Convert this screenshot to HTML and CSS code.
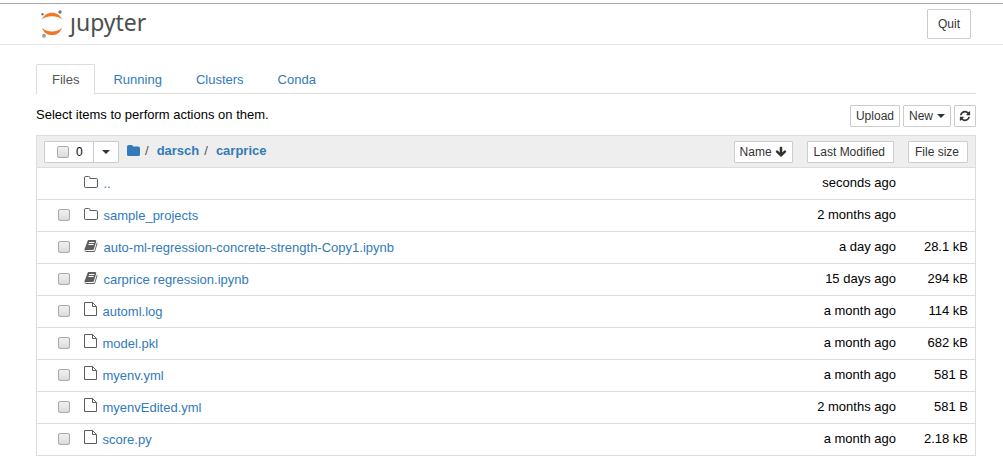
FILE: index.html
```html
<!DOCTYPE html>
<html lang="en">
<head>
<meta charset="utf-8">
<title>Home</title>
<link rel="stylesheet" href="styles.css">
</head>
<body>
<svg class="sprite" aria-hidden="true">
  <symbol id="folder-o" viewBox="0 0 14 14"><path d="M.5 11V3A1.300 1.300 0 0 1 1.800 1.500H4.700A1.300 1.300 0 0 1 6 2.800V3.500H12.200A1.300 1.300 0 0 1 13.500 4.800V11A1.300 1.300 0 0 1 12.200 12.500H1.800A1.300 1.300 0 0 1 .5 11Z" fill="none" stroke="currentColor"/></symbol>
  <symbol id="folder" viewBox="0 0 14 14"><path d="M0 10.500V2.500A1.700 1.700 0 0 1 1.700 1H4.500A1.700 1.700 0 0 1 6.200 2.500H11.300A1.700 1.700 0 0 1 13 4.200V10.500A1.500 1.500 0 0 1 11.500 12H1.500A1.500 1.500 0 0 1 0 10.500Z" fill="currentColor"/></symbol>
  <symbol id="file-o" viewBox="0 0 14 14"><path d="M.5 .5H8.500L12.500 4.500V13.500H.5ZM8.500 .5V4.500H12.500" fill="none" stroke="currentColor"/></symbol>
  <symbol id="book" viewBox="0 0 1792 1792"><path fill="currentColor" d="M1703 478q40 57 18 129l-275 906q-19 64-76.500 107.500t-122.500 43.500h-923q-77 0-148.500-53.500t-99.500-131.500q-24-67-2-127 0-4 3-27t4-37q1-8-3-21.500t-3-19.500q2-11 8-21t16.500-23.500 16.500-23.500q23-38 45-91.500t30-91.500q3-10 .5-30t-.5-28q3-11 17-28t17-23q21-36 42-92t25-90q1-9-2.500-32t.5-28q4-13 22-30.500t22-22.500q19-26 42.500-84.500t27.500-96.500q1-8-3-25.500t-2-26.500q2-8 9-18t18-23 17-21q8-12 16.500-30.500t15-35 16-36 19.500-32 26.500-23.500 36-11.500 47.500 5.500l-1 3q38-9 51-9h761q74 0 114 56t18 130l-274 906q-36 119-71.500 153.500t-128.500 34.500h-869q-27 0-38 15-11 16-1 43 24 70 144 70h923q29 0 56-15.500t35-41.500l300-987q7-22 5-57 38 15 59 43zm-1064 2q-4 13 2 22.500t20 9.500h608q13 0 25.500-9.500t16.500-22.500l21-64q4-13-2-22.500t-20-9.500h-608q-13 0-25.500 9.500t-16.500 22.500zm-83 256q-4 13 2 22.500t20 9.500h608q13 0 25.500-9.500t16.500-22.500l21-64q4-13-2-22.500t-20-9.500h-608q-13 0-25.500 9.500t-16.500 22.500z"/></symbol>
  <symbol id="refresh" viewBox="0 0 1792 1792"><path fill="currentColor" d="M1639 1056q0 5-1 7-64 268-268 434.500t-478 166.500q-146 0-282.500-55t-243.500-157l-129 129q-19 19-45 19t-45-19-19-45v-448q0-26 19-45t45-19h448q26 0 45 19t19 45-19 45l-137 137q71 66 161 102t187 36q134 0 250-65t186-179q11-17 53-117 8-23 30-23h192q13 0 22.500 9.500t9.500 22.500zm25-800v448q0 26-19 45t-45 19h-448q-26 0-45-19t-19-45 19-45l138-138q-148-137-349-137-134 0-250 65t-186 179q-11 17-53 117-8 23-30 23h-199q-13 0-22.500-9.500t-9.500-22.500v-7q65-268 270-434.500t480-166.500q146 0 284 55.500t245 156.500l130-129q19-19 45-19t45 19 19 45z"/></symbol>
  <symbol id="arrow-down" viewBox="0 0 1792 1792"><path fill="currentColor" d="M1675 832q0 53-37 90l-651 652q-39 37-91 37-53 0-90-37l-651-652q-38-36-38-90 0-53 38-91l74-75q39-37 91-37 53 0 90 37l294 294v-704q0-52 38-90t90-38h128q52 0 90 38t38 90v704l294-294q37-37 90-37 52 0 91 37l75 75q37 39 37 91z"/></symbol>
</svg>

<header class="header">
  <a class="logo" href="#" aria-label="jupyter">
    <svg class="logo-mark" viewBox="-1 0 24 28" aria-hidden="true">
      <path d="M2 9.500C4 4.800 7.500 2.800 12 2.800S20 4.800 22 9.500C19.500 7.200 16 6.200 12 6.200S4.500 7.200 2 9.500Z" fill="#f37726"/>
      <path d="M2 17.700C4 23.300 7.500 25 12 25S20 23.300 22 17.700C19.500 20.300 16 21.500 12 21.500S4.500 20.300 2 17.700Z" fill="#f37726"/>
      <circle cx="2.500" cy="4.200" r="1.200" fill="#767677"/>
      <circle cx="20" cy="2" r="1.700" fill="#767677"/>
      <circle cx="4" cy="25.700" r="2" fill="#9e9e9e"/>
    </svg>
    <span class="logo-text">ȷupyter</span>
  </a>
  <button class="btn btn-quit" type="button">Quit</button>
</header>

<main class="main">
  <nav class="tabs">
    <a class="tab active" href="#files">Files</a>
    <a class="tab" href="#running">Running</a>
    <a class="tab" href="#clusters">Clusters</a>
    <a class="tab" href="#conda">Conda</a>
  </nav>

  <div class="toolbar">
    <p class="hint">Select items to perform actions on them.</p>
    <div class="actions">
      <button class="btn" type="button">Upload</button>
      <button class="btn" type="button">New<span class="caret"></span></button>
      <button class="btn btn-icon" type="button" aria-label="Refresh"><svg class="icon-small"><use href="#refresh"/></svg></button>
    </div>
  </div>

  <table class="files">
    <thead>
      <tr>
        <th colspan="2">
          <div class="head">
            <div class="select-group">
              <label class="select-all"><input type="checkbox"><span>0</span></label>
              <button class="select-menu" type="button" aria-label="Select by type"><span class="caret"></span></button>
            </div>
            <nav class="crumbs"><a href="#" aria-label="Home"><svg class="icon"><use href="#folder"/></svg></a><span>/</span><a class="crumb" href="#darsch">darsch</a><span>/</span><a class="crumb" href="#carprice">carprice</a></nav>
            <button class="btn sort-name" type="button">Name<svg class="icon-small"><use href="#arrow-down"/></svg></button>
          </div>
        </th>
        <th class="modified"><button class="btn btn-sort" type="button">Last Modified</button></th>
        <th class="size"><button class="btn btn-sort" type="button">File size</button></th>
      </tr>
    </thead>
    <tbody>
      <tr><td class="check"></td><td class="name"><a href="#"><svg class="icon"><use href="#folder-o"/></svg>..</a></td><td class="modified">seconds ago</td><td class="size"></td></tr>
      <tr><td class="check"><input type="checkbox" aria-label="Select sample_projects"></td><td class="name"><a href="#"><svg class="icon"><use href="#folder-o"/></svg>sample_projects</a></td><td class="modified">2 months ago</td><td class="size"></td></tr>
      <tr><td class="check"><input type="checkbox" aria-label="Select auto-ml-regression-concrete-strength-Copy1.ipynb"></td><td class="name"><a href="#"><svg class="icon"><use href="#book"/></svg>auto-ml-regression-concrete-strength-Copy1.ipynb</a></td><td class="modified">a day ago</td><td class="size">28.1 kB</td></tr>
      <tr><td class="check"><input type="checkbox" aria-label="Select carprice regression.ipynb"></td><td class="name"><a href="#"><svg class="icon"><use href="#book"/></svg>carprice regression.ipynb</a></td><td class="modified">15 days ago</td><td class="size">294 kB</td></tr>
      <tr><td class="check"><input type="checkbox" aria-label="Select automl.log"></td><td class="name"><a class="plain" href="#"><svg class="icon"><use href="#file-o"/></svg>automl.log</a></td><td class="modified">a month ago</td><td class="size">114 kB</td></tr>
      <tr><td class="check"><input type="checkbox" aria-label="Select model.pkl"></td><td class="name"><a class="plain" href="#"><svg class="icon"><use href="#file-o"/></svg>model.pkl</a></td><td class="modified">a month ago</td><td class="size">682 kB</td></tr>
      <tr><td class="check"><input type="checkbox" aria-label="Select myenv.yml"></td><td class="name"><a class="plain" href="#"><svg class="icon"><use href="#file-o"/></svg>myenv.yml</a></td><td class="modified">a month ago</td><td class="size">581 B</td></tr>
      <tr><td class="check"><input type="checkbox" aria-label="Select myenvEdited.yml"></td><td class="name"><a class="plain" href="#"><svg class="icon"><use href="#file-o"/></svg>myenvEdited.yml</a></td><td class="modified">2 months ago</td><td class="size">581 B</td></tr>
      <tr><td class="check"><input type="checkbox" aria-label="Select score.py"></td><td class="name"><a class="plain" href="#"><svg class="icon"><use href="#file-o"/></svg>score.py</a></td><td class="modified">a month ago</td><td class="size">2.18 kB</td></tr>
    </tbody>
  </table>
</main>
</body>
</html>
```
FILE: styles.css
```css
* { box-sizing: border-box; }

body {
  margin: 0;
  padding-top: 3px;
  background: #fff;
  color: #000;
  font: 13px/20px "Liberation Sans", Arial, sans-serif;
}

a { color: #337ab7; text-decoration: none; }
button { font: inherit; cursor: pointer; }
svg { flex: none; }

.sprite { display: none; }
.icon { width: 14px; height: 14px; }
.icon-small { width: 12px; height: 12px; }

/* Header */
.header {
  display: flex;
  justify-content: space-between;
  align-items: center;
  height: 42px;
  padding: 0 32px 0 39px;
  border-top: 1px solid #aaa;
  border-bottom: 1px solid #e7e7e7;
}
.logo { display: flex; align-items: center; gap: 7px; }
.logo-mark { width: 24px; height: 28px; }
.logo-text {
  color: #4e4e4e;
  font: 23px/32px "Noto Sans", sans-serif;
  padding-bottom: 4px;
}

.btn {
  display: inline-flex;
  align-items: center;
  height: 22px;
  padding: 0 5px;
  border: 1px solid #ccc;
  border-radius: 1px;
  background: #fff;
  color: #333;
  font-size: 12px;
  gap: 4px;
}
.btn-quit { height: 30px; padding: 0 10px; }
.btn-icon { padding: 0 4px; }
.btn-sort { padding: 0 8px 0 6px; }

.caret {
  border-top: 4px solid currentColor;
  border-left: 4px solid transparent;
  border-right: 4px solid transparent;
}

/* Tabs */
.main { padding: 19px 27px 10px 36px; }
.tabs {
  display: flex;
  gap: 2px;
  border-bottom: 1px solid #ddd;
}
.tab {
  padding: 5px 15px 3px;
  border: 1px solid transparent;
  border-bottom: 0;
  border-radius: 2px 2px 0 0;
}
.tab.active {
  margin-bottom: -1px;
  padding-bottom: 4px;
  border-color: #ddd;
  background: #fff;
  color: #555;
}

.toolbar {
  display: flex;
  justify-content: space-between;
  align-items: center;
  padding: 11px 0 8px;
}
.hint { margin: 0; padding-bottom: 2px; }
.actions { display: flex; gap: 3px; }

/* File list */
.files {
  width: 100%;
  border: 1px solid #ddd;
  border-collapse: collapse;
}
.files tr { height: 32px; border-bottom: 1px solid #ddd; }
.files th, .files td { padding: 0; font-weight: normal; }
.files thead { background: #eee; }
.files .modified, .files .size { width: 1%; text-align: right; white-space: nowrap; }
.files .modified { padding-left: 14px; }
.files th.modified { padding-right: 2px; }
.files .size { padding-left: 12px; padding-right: 7px; }
.files td.modified, .files td.size { padding-bottom: 2px; }
.files .check { width: 47px; padding-left: 21px; }
.files th .btn { vertical-align: middle; }

input[type="checkbox"] {
  appearance: none;
  display: block;
  width: 12px;
  height: 12px;
  margin: 0;
  border: 1px solid #aaa;
  border-radius: 2px;
  background: linear-gradient(#f2f2f2, #dadada);
}
.files .check { padding-bottom: 2px; }

.name a { display: flex; align-items: center; gap: 6px; }
.name a.plain { gap: 5px; }
.name svg { margin-bottom: 4px; color: #5e5e5e; }
.name .plain svg { margin-bottom: 6px; }

.head { display: flex; align-items: center; padding-left: 7px; }
.select-group {
  display: flex;
  height: 22px;
  border: 1px solid #ccc;
  border-radius: 1px;
  background: #fff;
}
.select-all {
  display: flex;
  align-items: center;
  gap: 7px;
  width: 49px;
  padding-left: 12px;
  border-right: 1px solid #ccc;
  font-size: 12px;
}
.select-menu {
  display: flex;
  align-items: center;
  padding: 0 8px;
  border: 0;
  background: none;
  color: #333;
}
.crumbs {
  display: flex;
  align-items: center;
  gap: 4px;
  padding: 0 0 2px 8px;
  font-weight: bold;
}
.crumbs a { display: flex; }
.crumbs span { color: #555; font-weight: normal; }
.crumbs .crumb { padding: 0 1px 0 4px; }
.sort-name { margin-left: auto; gap: 3px; }
```
